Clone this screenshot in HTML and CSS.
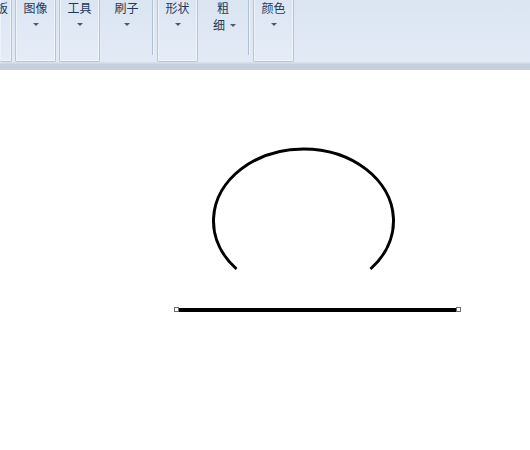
FILE: index.html
```html
<!DOCTYPE html>
<html lang="zh">
<head>
<meta charset="utf-8">
<link rel="stylesheet" href="styles.css">
</head>
<body>
<div class="ribbon">
  <div class="group box first"><span class="label">板</span></div>
  <div class="group box g-image"><span class="label">图像</span><span class="arrow"></span></div>
  <div class="group box g-tools"><span class="label">工具</span><span class="arrow"></span></div>
  <div class="group plain g-brush"><span class="label">刷子</span><span class="arrow"></span></div>
  <div class="sep"></div>
  <div class="group box g-shape"><span class="label">形状</span><span class="arrow"></span></div>
  <div class="group plain g-size">
    <span class="label">粗</span>
    <span class="row2"><span class="label">细</span><span class="arrow inline"></span></span>
  </div>
  <div class="sep sep2"></div>
  <div class="group box g-color"><span class="label">颜色</span><span class="arrow"></span></div>
</div>
<div class="strip"></div>
<div class="canvas">
  <svg class="drawing" width="530" height="380" viewBox="0 0 530 380">
    <path d="M236.5 199 A90 72 0 1 1 370.5 199" fill="none" stroke="#000" stroke-width="3"/>
    <rect x="177" y="238" width="280" height="4" fill="#000"/>
    <rect x="174.5" y="237.5" width="4" height="4" fill="#fff" stroke="#6b6b6b" stroke-width="1"/>
    <rect x="456.5" y="237.5" width="4" height="4" fill="#fff" stroke="#6b6b6b" stroke-width="1"/>
  </svg>
</div>
</body>
</html>
```
FILE: styles.css
```css
* { box-sizing: border-box; }
html, body {
  margin: 0;
  padding: 0;
  background: #ffffff;
  font-family: "Noto Sans CJK SC", "Noto Sans", sans-serif;
}
.ribbon {
  display: flex;
  align-items: flex-start;
  height: 63px;
  background: linear-gradient(#dbe5f2, #dfe8f4 60%, #e2eaf6);
  border-bottom: 1px solid #d5dfec;
}
.group {
  height: 62px;
  display: flex;
  flex-direction: column;
  align-items: center;
  padding-top: 1px;
  font-size: 12px;
  line-height: 14px;
  color: #1e395b;
}
.box {
  border: 1px solid #b7c5d8;
  border-top: none;
  border-radius: 0 0 2px 2px;
  background: linear-gradient(#dce6f3, #e4ecf7);
  box-shadow: inset 1px 0 0 #eef3fa, inset -1px 0 0 #eef3fa, inset 0 -1px 0 #f2f6fb;
}
.label { display: block; }
.arrow {
  display: block;
  width: 0;
  height: 0;
  margin-top: 8px;
  border-left: 3px solid transparent;
  border-right: 3px solid transparent;
  border-top: 3px solid #4d5a6c;
}
.arrow.inline { margin-top: 0; margin-left: 5px; }
.first {
  width: 12px;
  border-left: none;
  align-items: flex-start;
}
.first .label { margin-left: -4px; }
.g-image { width: 41px; margin-left: 3px; }
.g-tools { width: 41px; margin-left: 3px; }
.g-brush { width: 51px; margin-left: 1px; }
.sep {
  width: 1px;
  height: 55px;
  background: #b3c0d2;
  box-shadow: 1px 0 0 #f0f4fa;
}
.g-shape { width: 41px; margin-left: 4px; }
.g-size { width: 50px; }
.row2 {
  display: flex;
  align-items: center;
  margin-top: 3px;
  margin-left: 3px;
}
.g-color { width: 41px; margin-left: 4px; }
.strip {
  height: 7px;
  background: #c5cfdf;
  border-top: 1px solid #d0d9e7;
}
.canvas {
  position: relative;
  height: 380px;
  background: #ffffff;
}
.drawing {
  position: absolute;
  left: 0;
  top: 0;
}
```
